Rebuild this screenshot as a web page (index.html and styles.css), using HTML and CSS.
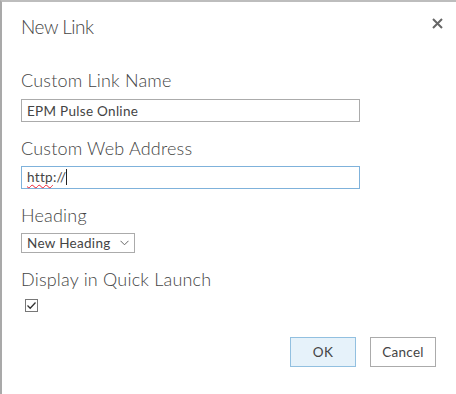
FILE: index.html
```html
<!DOCTYPE html>
<html lang="en">
<head>
    <meta charset="UTF-8">
    <meta name="viewport" content="width=device-width, initial-scale=1.0">
    <title>New Link</title>
    <link rel="stylesheet" href="styles.css">
</head>
<body>
    <div class="dialog">
        <div class="dialog-header">
            <h1 class="dialog-title">New Link</h1>
            <button class="close-btn" title="Close">
                <svg width="11" height="11" viewBox="0 0 11 11">
                    <path d="M1 1 L10 10 M10 1 L1 10" stroke="#666" stroke-width="2" fill="none"/>
                </svg>
            </button>
        </div>

        <label class="field-label label-first">Custom Link Name</label>
        <input type="text" class="text-field" value="EPM Pulse Online">

        <label class="field-label">Custom Web Address</label>
        <div class="text-field focused"><span class="misspelled">http</span>://<span class="caret"></span></div>

        <label class="field-label">Heading</label>
        <div class="select-box">
            <span>New Heading</span>
            <svg width="9" height="6" viewBox="0 0 9 6">
                <path d="M0.5 0.8 L4.5 4.8 L8.5 0.8" stroke="#666" stroke-width="1" fill="none"/>
            </svg>
        </div>

        <label class="field-label">Display in Quick Launch</label>
        <span class="check-box">
            <svg width="11" height="11" viewBox="0 0 11 11">
                <path d="M1.5 5.5 L4.2 8.2 L9.5 2.5" stroke="#333" stroke-width="1.3" fill="none"/>
            </svg>
        </span>

        <div class="dialog-buttons">
            <button class="btn btn-primary">OK</button>
            <button class="btn">Cancel</button>
        </div>
    </div>
</body>
</html>
```

FILE: styles.css
```css
body {
    margin: 0;
    font-family: Lato, "Open Sans", sans-serif;
    color: #444;
    background-color: #fff;
}
.dialog {
    box-sizing: border-box;
    height: 394px;
    border-top: 2px solid #bdbdbd;
    border-left: 2px solid #a9a9a9;
    padding: 11px 20px 0 19px;
}
.dialog-header {
    display: flex;
    justify-content: space-between;
    align-items: flex-start;
}
.dialog-title {
    margin: 0;
    font-size: 19px;
    font-weight: 300;
    letter-spacing: -0.5px;
    line-height: 28px;
    color: #444;
}
.close-btn {
    width: 22px;
    height: 22px;
    margin-top: -1px;
    margin-right: -12px;
    padding: 0;
    border: none;
    background: none;
    display: flex;
    align-items: center;
    justify-content: center;
    cursor: pointer;
}
.field-label {
    display: block;
    font-size: 18px;
    font-weight: 300;
    letter-spacing: 0.2px;
    line-height: 24px;
    margin-top: 14px;
    margin-bottom: 6px;
}
.label-first {
    margin-top: 27px;
    margin-bottom: 7px;
}
.text-field {
    box-sizing: border-box;
    display: block;
    width: 339px;
    height: 23px;
    margin: 0;
    padding: 0 5px;
    border: 1px solid #ababab;
    font-family: inherit;
    font-size: 13.5px;
    letter-spacing: 0.3px;
    line-height: 21px;
    color: #444;
    outline: none;
}
.focused {
    border-color: #7fb2db;
}
.misspelled {
    text-decoration: underline wavy #e23;
    text-decoration-thickness: 1px;
    text-underline-offset: 2px;
}
.caret {
    display: inline-block;
    width: 1px;
    height: 16px;
    background-color: #222;
    vertical-align: -3px;
}
.select-box {
    box-sizing: border-box;
    width: 114px;
    height: 20px;
    border: 1px solid #ababab;
    padding: 0 5px 0 5px;
    display: flex;
    align-items: center;
    justify-content: space-between;
    font-size: 13.5px;
    letter-spacing: 0.3px;
    line-height: 18px;
}
.check-box {
    box-sizing: border-box;
    display: flex;
    align-items: center;
    justify-content: center;
    width: 13px;
    height: 13px;
    margin: 8px 0 0 4px;
    border: 1px solid #777;
}
.dialog-buttons {
    display: flex;
    justify-content: flex-end;
    gap: 14px;
    margin-top: 25px;
}
.btn {
    box-sizing: border-box;
    width: 66px;
    height: 30px;
    border: 1px solid #ababab;
    background-color: #fff;
    font-family: inherit;
    font-size: 13.5px;
    letter-spacing: 0.3px;
    color: #444;
    cursor: pointer;
}
.btn-primary {
    background-color: #e6f2fa;
    border-color: #92c0e0;
}
```
